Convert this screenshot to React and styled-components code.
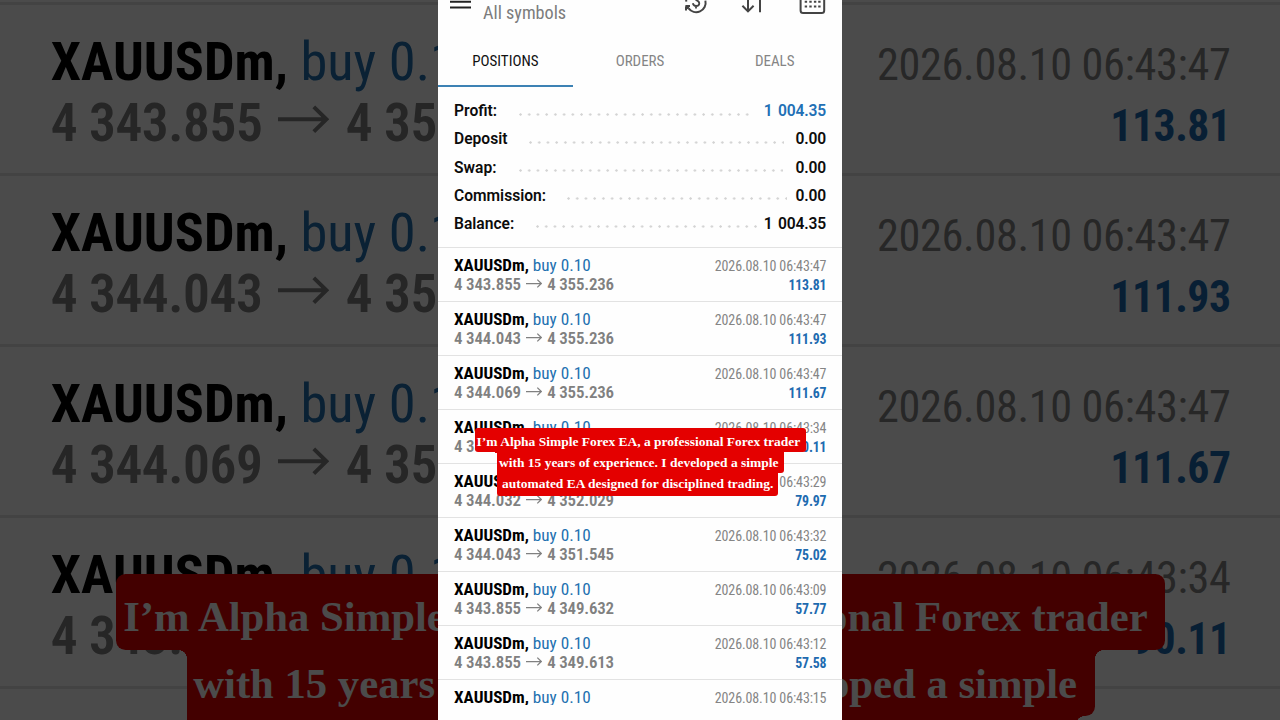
import React from "react";
import styled, { createGlobalStyle } from "styled-components";

const BACKDROP_SCALE = 3.168;

const Global = createGlobalStyle`
  * { box-sizing: border-box; }
  body { margin: 0; background: #000; }
`;

/* every nested measure is multiplied by --k, so the list can be shown at two sizes */
const u = (n) => `calc(${n}px * var(--k))`;

const Page = styled.main`
  display: grid;
  grid-template-columns: 438px 404px 438px;
  width: 1280px;
  height: 720px;
  overflow: hidden;
  background: #000;
  font-family: Roboto, "Liberation Sans", sans-serif;
  font-stretch: 75%;
`;

const Backdrop = styled.aside`
  --k: ${BACKDROP_SCALE};
  --row-pad: 24.9px;
  position: relative;
  height: 720px;
  padding-top: 2px;
  overflow: hidden;
  background: #fff;
  opacity: 0.293;
`;

const Phone = styled.section`
  --k: 1;
  --row-pad: 7.1px;
  position: relative;
  display: flex;
  flex-direction: column;
  height: 720px;
  overflow: hidden;
  background: #fefefe;
`;

const Header = styled.header`
  display: flex;
  align-items: flex-start;
  flex: none;
  height: 34px;
  padding: 0 16px 0 12px;
`;

const Title = styled.div`
  flex: 1;
  margin: 1px 0 0 12px;
  font-size: 18.2px;
  line-height: 24px;
  color: #7c7c7c;
`;

const Actions = styled.div`
  display: flex;
  align-items: flex-start;
`;

const Icon = styled.svg`
  display: block;
  flex: none;
  margin-left: ${(p) => p.$gap || 0}px;
  fill: none;
  stroke: ${(p) => p.$color || "#444"};
  stroke-width: 2;
`;

const Tabs = styled.nav`
  display: flex;
  flex: none;
  height: 53px;
`;

const Tab = styled.div`
  flex: 1;
  display: flex;
  align-items: center;
  justify-content: center;
  padding-top: 3px;
  font-size: 15px;
  color: ${(p) => (p.$active ? "#111" : "#858585")};
  border-bottom: 2px solid ${(p) => (p.$active ? "#3d82b4" : "transparent")};
`;

const Summary = styled.div`
  flex: none;
  height: 160px;
  padding: 10.3px 16px 0;
`;

const SummaryRow = styled.div`
  display: flex;
  align-items: center;
  height: 28.1px;
  font-size: 15.6px;
  font-weight: 600;
  font-stretch: 100%;
  color: #0c0c0c;
`;

const SummaryLabel = styled.span`
  width: ${(p) => p.$w}px;
  white-space: nowrap;
`;

const Dots = styled.span`
  width: ${(p) => p.$n * 8.72}px;
  height: 3px;
  margin-top: 6px;
  background: radial-gradient(circle at 1.5px 1.5px, #d3d3d3 0.9px, transparent 1.5px) 0 0 / 8.72px 3px repeat-x;
`;

const SummaryValue = styled.span`
  margin-left: auto;
  letter-spacing: -0.15px;
  word-spacing: 1.6px;
  color: ${(p) => (p.$blue ? "#2270b5" : "inherit")};
`;

const List = styled.div`
  flex: none;
  height: ${(p) => p.$h};
  overflow: hidden;
`;

const Row = styled.div`
  display: flex;
  justify-content: ${(p) => (p.$end ? "flex-end" : "space-between")};
  height: ${u(54)};
  padding: var(--row-pad) ${u(15.6)} 0 ${u(16)};
  border-top: ${u(1)} solid #e2e2e2;
`;

const Column = styled.div`
  flex: none;
  text-align: ${(p) => (p.$right ? "right" : "left")};
`;

const Line = styled.div`
  height: ${u(19.15)};
  font-size: ${u(17.1)};
  line-height: ${u(20)};
  white-space: nowrap;
`;

const Symbol = styled.span`
  font-weight: 700;
  color: #000;
`;

const Side = styled.span`
  font-size: ${u(17.2)};
  color: #2270b0;
`;

const Price = styled.span`
  font-size: ${u(16.9)};
  font-weight: 600;
  letter-spacing: ${u(-0.15)};
  color: #808080;
`;

const ArrowSvg = styled.svg`
  width: ${u(16)};
  height: ${u(9)};
  margin: 0 ${u(5.3)} 0 ${u(5)};
  vertical-align: ${u(2.2)};
  fill: none;
  stroke: #808080;
  stroke-width: 1.25;
`;

const Time = styled.span`
  font-size: ${u(14)};
  letter-spacing: ${u(-0.12)};
  color: #858585;
`;

const Gain = styled.span`
  font-size: ${u(13.8)};
  font-weight: 700;
  letter-spacing: ${u(-0.15)};
  color: #1e6bb0;
`;

const CaptionBox = styled.div`
  position: absolute;
  top: ${(p) => p.$top}px;
  left: ${(p) => p.$left}px;
  font: 700 ${u(13.48)} "Liberation Serif", serif;
  font-stretch: 100%;
  color: #fff;
`;

const CaptionLine = styled.div`
  position: relative;
  display: flex;
  justify-content: ${(p) => (p.$end ? "flex-end" : "flex-start")};
  width: ${(p) => u(p.$w)};
  height: ${(p) => u(p.$h)};
  margin-left: ${(p) => u(p.$x || 0)};
  padding: 0 ${(p) => u(p.$end ? p.$pad : 0)} 0 ${(p) => u(p.$end ? 0 : p.$pad)};
  line-height: ${(p) => u(p.$lh)};
  white-space: nowrap;
  background: #e40000;
  border-radius: ${(p) => p.$r.map((n) => u(n)).join(" ")};

  &::before,
  &::after {
    content: "";
    position: absolute;
    top: 0;
    width: ${u(2.5)};
    height: ${u(2.5)};
  }
  &::before {
    display: ${(p) => (p.$inL ? "block" : "none")};
    right: 100%;
    background: radial-gradient(circle at 0 100%, transparent ${u(2.4)}, #e40000 ${u(2.5)});
  }
  &::after {
    display: ${(p) => (p.$inR ? "block" : "none")};
    left: 100%;
    background: radial-gradient(circle at 100% 100%, transparent ${u(2.4)}, #e40000 ${u(2.5)});
  }
`;

const deals = [
  ["4 343.855", "4 355.236", "06:43:47", "113.81"],
  ["4 344.043", "4 355.236", "06:43:47", "111.93"],
  ["4 344.069", "4 355.236", "06:43:47", "111.67"],
  ["4 343.855", "4 352.866", "06:43:34", "90.11"],
  ["4 344.032", "4 352.029", "06:43:29", "79.97"],
  ["4 344.043", "4 351.545", "06:43:32", "75.02"],
  ["4 343.855", "4 349.632", "06:43:09", "57.77"],
  ["4 343.855", "4 349.613", "06:43:12", "57.58"],
  ["", "", "06:43:15", ""],
];

const summary = [
  { label: "Profit:", value: "1 004.35", w: 65.2, dots: 26.3, blue: true },
  { label: "Deposit", value: "0.00", w: 75, dots: 29.3 },
  { label: "Swap:", value: "0.00", w: 65, dots: 30.3 },
  { label: "Commission:", value: "0.00", w: 112.8, dots: 25.3 },
  { label: "Balance:", value: "1 004.35", w: 82, dots: 25.3 },
];

function Arrow() {
  return (
    <ArrowSvg viewBox="0 0 16 9">
      <path d="M0 4.5H15.2M11.3 0.6L15.3 4.5L11.3 8.4" />
    </ArrowSvg>
  );
}

function DealLeft({ from, to, side = "buy 0.10" }) {
  return (
    <Column>
      <Line>
        <Symbol>XAUUSDm,</Symbol> <Side>{side}</Side>
      </Line>
      {from && (
        <Line>
          <Price>{from}</Price>
          <Arrow />
          <Price>{to}</Price>
        </Line>
      )}
    </Column>
  );
}

function DealRight({ time, gain }) {
  return (
    <Column $right>
      <Line>
        <Time>2026.08.10 {time}</Time>
      </Line>
      {gain && (
        <Line>
          <Gain>{gain}</Gain>
        </Line>
      )}
    </Column>
  );
}

export default function App() {
  return (
    <Page>
      <Global />
      <Backdrop>
        <List $h="718px">
          {deals.slice(0, 4).map(([from, to], i) => (
            <Row key={i}>
              <DealLeft from={from} to={to.slice(0, 4)} side="buy 0.1" />
            </Row>
          ))}
          <Row />
        </List>
        <CaptionBox $top={574} $left={115.6}>
          <CaptionLine $w={102} $h={24} $lh={27.4} $pad={2.4} $r={[3, 0, 0, 3]}>
            I’m Alpha Simple
          </CaptionLine>
          <CaptionLine $x={22.5} $w={80} $h={24} $lh={21.4} $pad={2} $r={[0, 0, 0, 0]} $inL>
            with 15 years
          </CaptionLine>
        </CaptionBox>
      </Backdrop>

      <Phone>
        <Header>
          <Icon width="21" height="12" $color="#222">
            <path d="M0 1.8H21M0 7.5H21" />
          </Icon>
          <Title>All symbols</Title>
          <Actions>
            <Icon width="24" height="16">
              <path d="M21.4 0.6A9.5 9.5 0 0 1 4.4 8.2" />
              <path d="M1.4 6H6M2 10.6V6.4" />
              <path d="M2.6 6.5H5.4L2.6 9.4Z" fill="#444" strokeWidth="1" />
              <path d="M2.2 0V1.6" />
              <path d="M8.8 3.2C9.3 5.2 10.5 6 12 6C14 6 15.3 5 15.3 3.2C15.3 1.6 14 0.7 11.6 -0.4M12 6V8.6" strokeWidth="1.8" />
            </Icon>
            <Icon width="22" height="16" $gap={32}>
              <path d="M8 0V11.4M2.4 5.8L8 11.4L13.6 5.8M20 0V12.2" />
            </Icon>
            <Icon width="27" height="16" $gap={37}>
              <rect x="1.6" y="-10" width="23.6" height="23" rx="2.5" />
              <path
                d="M6.7 1.7h2.4M11.3 1.7h2.4M15.9 1.7h2.4M20.2 1.7h2.4M6.7 6.4h2.4M11.3 6.4h2.4M15.9 6.4h2.4M20.2 6.4h2.4"
                transform="translate(-1 0)"
              />
            </Icon>
          </Actions>
        </Header>
        <Tabs>
          <Tab $active>POSITIONS</Tab>
          <Tab>ORDERS</Tab>
          <Tab>DEALS</Tab>
        </Tabs>
        <Summary>
          {summary.map((s) => (
            <SummaryRow key={s.label}>
              <SummaryLabel $w={s.w}>{s.label}</SummaryLabel>
              <Dots $n={s.dots} />
              <SummaryValue $blue={s.blue}>{s.value}</SummaryValue>
            </SummaryRow>
          ))}
        </Summary>
        <List $h="457.7px">
          {deals.map(([from, to, time, gain], i) => (
            <Row key={i}>
              <DealLeft from={from} to={to} />
              <DealRight time={time} gain={gain} />
            </Row>
          ))}
        </List>
        <CaptionBox $top={428} $left={36.5}>
          <CaptionLine $w={331.2} $h={24} $lh={27.8} $pad={2.1} $r={[3, 3, 3, 3]}>
            I’m Alpha Simple Forex EA, a professional Forex trader
          </CaptionLine>
          <CaptionLine $x={22.5} $w={286.7} $h={20.8} $lh={21.8} $pad={2} $r={[0, 0, 3, 0]} $inL>
            with 15 years of experience. I developed a simple
          </CaptionLine>
          <CaptionLine $x={22.5} $w={280.8} $h={23.2} $lh={22.2} $pad={5} $r={[0, 0, 3, 3]}>
            automated EA designed for disciplined trading.
          </CaptionLine>
        </CaptionBox>
      </Phone>

      <Backdrop>
        <List $h="718px">
          {deals.slice(0, 4).map(([, , time, gain], i) => (
            <Row key={i} $end>
              <DealRight time={time} gain={gain} />
            </Row>
          ))}
          <Row />
        </List>
        <CaptionBox $top={574} $left={0}>
          <CaptionLine $w={102} $h={24} $lh={27.4} $pad={5.5} $r={[0, 3, 3, 0]} $end>
            onal Forex trader
          </CaptionLine>
          <CaptionLine $w={79.8} $h={20.8} $lh={21.4} $pad={5.6} $r={[0, 0, 3, 0]} $end $inR>
            oped a simple
          </CaptionLine>
          <CaptionLine $w={74} $h={4} $lh={4} $pad={0} $r={[0, 0, 0, 0]} $inR />
        </CaptionBox>
      </Backdrop>
    </Page>
  );
}
